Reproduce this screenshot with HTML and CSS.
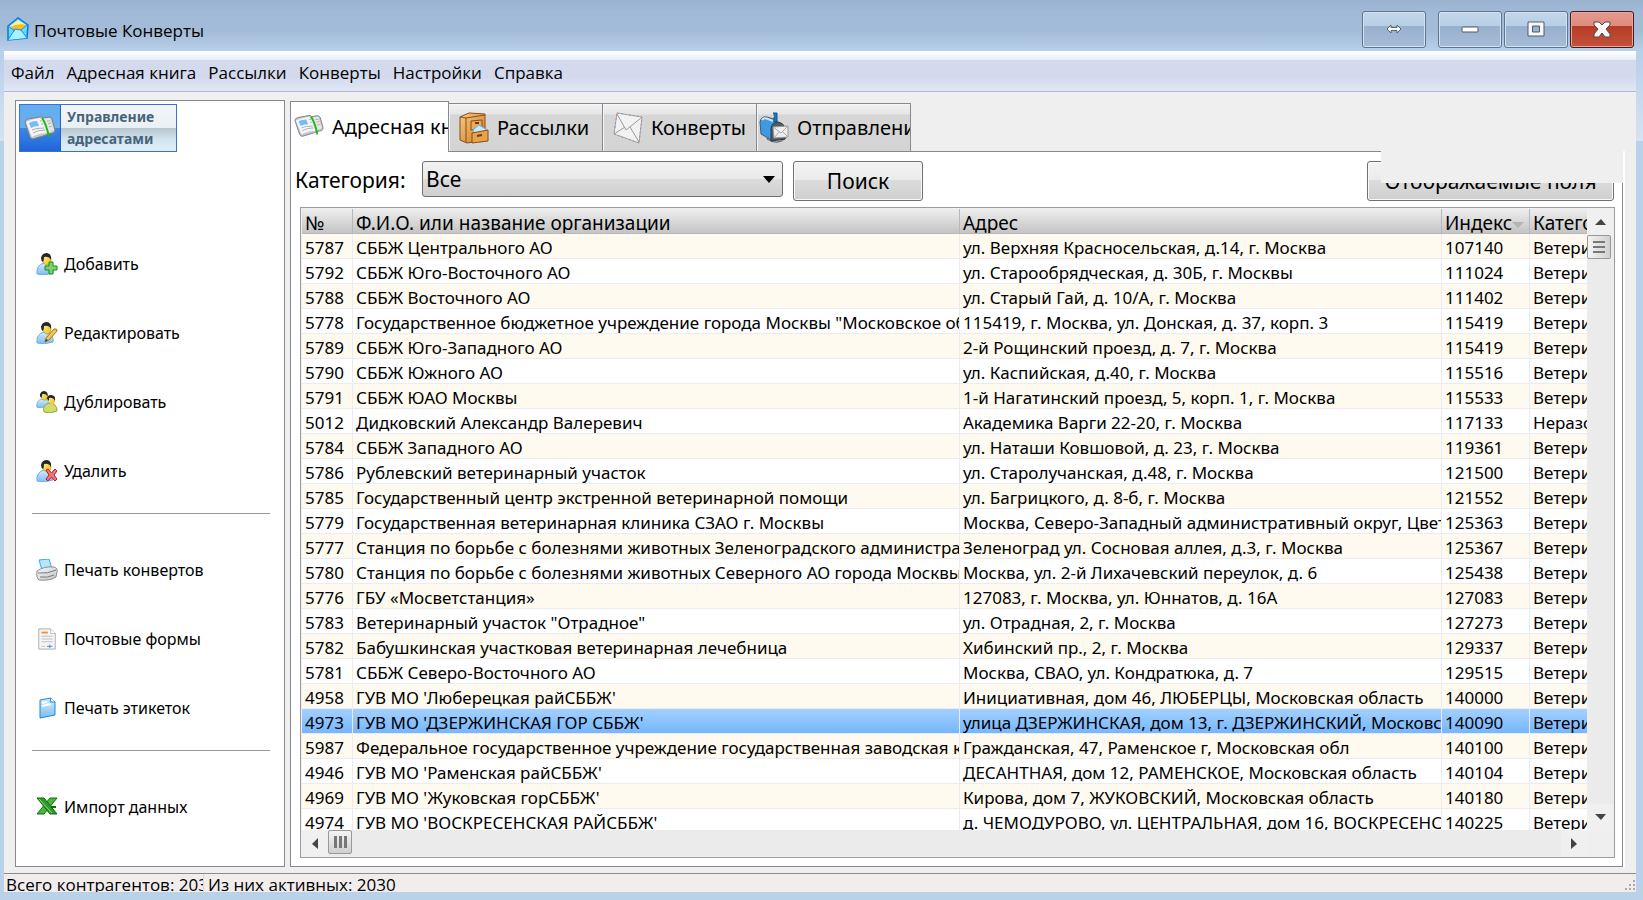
FILE: index.html
```html
<!DOCTYPE html>
<html lang="ru">
    <head>
        <meta charset="utf-8" />
        <title>Почтовые Конверты</title>
        <link rel="stylesheet" href="styles.css">
    </head>

    <body>
        <svg class="defs" width="0" height="0">
            <defs>
                <linearGradient id="blue" x1="0" y1="0" x2="0" y2="1">
                    <stop offset="0" stop-color="#d4ecff" />
                    <stop offset="1" stop-color="#7dbdf2" />
                </linearGradient>
                <linearGradient id="skin" x1="0" y1="0" x2="1" y2="1">
                    <stop offset="0" stop-color="#fff2a0" />
                    <stop offset="1" stop-color="#eeb808" />
                </linearGradient>
                <linearGradient id="wood" x1="0" y1="0" x2="1" y2="1">
                    <stop offset="0" stop-color="#f8cb82" />
                    <stop offset="1" stop-color="#c87a28" />
                </linearGradient>
                <linearGradient id="metal" x1="0" y1="0" x2="1" y2="1">
                    <stop offset="0" stop-color="#fafafa" />
                    <stop offset="1" stop-color="#bfc2c5" />
                </linearGradient>
            </defs>
            <symbol id="book" viewBox="0 0 32 26">
                <path d="M1 7 Q1 5 4 4 L15 2 Q18 1 19 3 L25 2 Q27 2 28 4 L31 15 Q31 17 29 18 L24 19 L22 20 L9 24 Q7 24 6 22 Z" fill="#c5c9cc" stroke="#7a8085" />
                <path d="M2 7 Q8 4 16 3 L18 4 L23 18 Q15 18 8 22 Z" fill="#f3f5f6" />
                <path d="M18 4 L26 3 L30 15 L23 18 Z" fill="#e4e7e8" />
                <path d="M5 8 Q8 6 13 6 L15 11 Q10 11 7 13 Z" fill="#74bdf5" />
                <path d="M8 15 Q12 13 20 13 M9 18 Q14 15 21 15 M16 6 L18 6 M17 9 L19 9 M23 6 L26 6 M24 9 L27 8 M25 12 L28 11" fill="none" stroke="#a9afb4" />
                <path d="M18 3 Q22 8 25 22" fill="none" stroke="#22b814" stroke-width="2" />
            </symbol>
            <symbol id="person" viewBox="0 0 22 22">
                <path d="M1 21 Q0 12 8 10 L13 11 Q18 14 17 20 Q8 23 1 21Z" fill="url(#blue)" stroke="#69aeea" />
                <ellipse cx="11" cy="7" rx="4" ry="5" fill="url(#skin)" stroke="#a3780a" stroke-width=".5" />
                <path d="M5 5 Q6 0 11 0 Q16 1 15 7 Q13 3 8 4 Q8 7 7 9 Q5 8 5 5Z" fill="#262626" />
            </symbol>
        </svg>

        <div class="window">
            <header class="titlebar">
                <svg class="app-icon" viewBox="0 0 22 24">
                    <path d="M1 9 L11 1 L21 8 L20 21 L1 23 Z" fill="#62dcff" stroke="#0878e0" stroke-width="1.5" />
                    <path d="M3 9 L11 3 L19 8 L15 13 L6 13 Z" fill="#fff09c" />
                    <path d="M3 10 Q11 6 19 8 L15 13 L6 13 Z" fill="#f9bd18" />
                    <path d="M1 23 L8 12 L14 13 L20 21 M1 9 L8 14 M20 8 L14 13" fill="#a8f2ff" stroke="#108ef0" stroke-width="1" />
                </svg>
                <span class="title">Почтовые Конверты</span>
                <div class="window-buttons">
                    <button class="resize" aria-label="Переместить">
                        <svg width="16" height="10" viewBox="0 0 16 10"><path d="M1 5 L5 1 V3.500 H11 V1 L15 5 L11 9 V6.500 H5 V9 Z" fill="#fff" stroke="#596577" /></svg>
                    </button>
                    <button aria-label="Свернуть">
                        <svg width="18" height="8" viewBox="0 0 18 8"><rect x="1" y="2" width="16" height="5" rx="1" fill="#fff" stroke="#525a6b" /></svg>
                    </button>
                    <button aria-label="Развернуть">
                        <svg width="18" height="16" viewBox="0 0 18 16"><path d="M1 1 H17 V15 H1 Z M5.500 5 V11 H12.500 V5 Z" fill="#f6f8fb" fill-rule="evenodd" stroke="#525a6b" /></svg>
                    </button>
                    <button class="close" aria-label="Закрыть">
                        <svg width="20" height="17" viewBox="0 0 20 17"><path d="M2 1 H7 L10 4 L13 1 H18 V4 L14 8 L18 13 V16 H13 L10 12 L7 16 H2 V13 L6 8 L2 4 Z" fill="#f8f6f6" stroke="#4f4653" /></svg>
                    </button>
                </div>
            </header>

            <div class="client">
                <nav class="menu">
                    <a href="#">Файл</a>
                    <a href="#">Адресная книга</a>
                    <a href="#">Рассылки</a>
                    <a href="#">Конверты</a>
                    <a href="#">Настройки</a>
                    <a href="#">Справка</a>
                </nav>

                <div class="content">
                    <aside class="sidebar">
                        <button class="manage">
                            <span class="manage-icon"><svg width="32" height="26"><use href="#book" /></svg></span>
                            <span class="manage-text">Управление<br />адресатами</span>
                        </button>
                        <div class="actions">
                            <button>
                                <svg viewBox="0 0 22 22"><use href="#person" /><path d="M13 9 H17 V13 H21 V17 H17 V21 H13 V17 H9 V13 H13Z" fill="#7ed070" stroke="#168c1c" /></svg>
                                Добавить
                            </button>
                            <button>
                                <svg viewBox="0 0 22 22"><use href="#person" /><path d="M9 20 L10 16 L18 7 Q21 6 21 9 L13 18 Z" fill="#f5c45d" stroke="#a7751c" /><path d="M9 20 L10 17 L12 18Z" fill="#333" /></svg>
                                Редактировать
                            </button>
                            <button>
                                <svg viewBox="0 0 22 22"><use href="#person" width="17" height="17" /><path d="M8 21 Q6 14 13 12 Q21 12 21 20 Q14 23 8 21Z" fill="#cfdd70" stroke="#93a82f" /><ellipse cx="16" cy="9" rx="3" ry="4" fill="url(#skin)" /><path d="M11 8 Q11 4 15 4 Q20 4 19 10 Q17 6 13 7 L13 10Z" fill="#262626" /></svg>
                                Дублировать
                            </button>
                            <button>
                                <svg viewBox="0 0 22 22"><use href="#person" /><path d="M10 10 L12 9 L15.500 13 L19 9 L21 11 L18 15 L21 19 L19 21 L15.500 17 L12 21 L10 19 L13 15Z" fill="#ee7777" stroke="#b81f27" /></svg>
                                Удалить
                            </button>
                            <hr />
                            <button>
                                <svg viewBox="0 0 22 22"><path d="M3 1 L13 0 L16 10 L6 11Z" fill="#b5e5ff" stroke="#3aa9ec" /><path d="M1 12 Q8 7 18 8 Q22 9 21 13 L20 18 Q14 22 3 21 Q0 19 1 12Z" fill="url(#metal)" stroke="#8b8d90" /><path d="M2 14 Q12 15 20 11 M4 18 Q12 19 18 16" fill="none" stroke="#77797c" /></svg>
                                Печать конвертов
                            </button>
                            <button>
                                <svg viewBox="0 0 22 24"><path d="M2 1 H15 L20 6 V23 H2Z" fill="#f5f5f6" stroke="#aaa" /><path d="M15 1 V6 H20" fill="#fff" stroke="#bbb" /><path d="M5 5 H12" stroke="#ff8a2a" stroke-width="2" /><path d="M5 9 H17 M5 12 H17 M5 15 H17 M5 20 H9" stroke="#b9bbc0" /><path d="M11 20 H17 M14 18 V22" stroke="#2e8cd8" /></svg>
                                Почтовые формы
                            </button>
                            <button>
                                <svg viewBox="0 0 22 22"><path d="M4 3 L15 1 L19 5 V18 L4 21Z" fill="url(#blue)" stroke="#1989d8" /><path d="M15 1 L14 5 L19 5" fill="#fff" stroke="#1989d8" /><path d="M6 6 L11 5 M6 9 L15 7" stroke="#fff" stroke-width="2" /></svg>
                                Печать этикеток
                            </button>
                            <hr />
                            <button>
                                <svg viewBox="0 0 22 22"><path d="M14 2 H21 L8 18 H1 Z" fill="#4cb83a" stroke="#116b10" /><path d="M1 2 H8 L21 18 H14 Z" fill="#2c9b27" stroke="#116b10" /><path d="M3 3 L16 17" stroke="#8be07a" /><path d="M15 11 H20" stroke="#116b10" stroke-width="2" /></svg>
                                Импорт данных
                            </button>
                        </div>
                    </aside>

                    <main class="main">
                        <div class="tabs" role="tablist">
                            <button class="tab active" role="tab" aria-selected="true">
                                <svg viewBox="0 0 32 26"><use href="#book" width="32" height="26" /></svg>
                                Адресная книга
                            </button>
                            <button class="tab" role="tab">
                                <svg viewBox="0 0 30 32"><path d="M1 5 L10 1 L26 2 V28 L8 31 L1 28Z" fill="url(#wood)" stroke="#8a4d13" /><path d="M7 6 L26 3 M7 6 V31 M1 5 L7 6" fill="none" stroke="#8a4d13" /><path d="M12 9 L23 8 V17 L12 18Z" fill="#e8aa58" stroke="#8a4d13" /><path d="M16 11 H20" stroke="#6d3a0c" stroke-width="2" /><path d="M14 18 L20 13 L28 18 L24 24 L16 23Z" fill="#c3ebff" stroke="#5eb8e8" /><path d="M13 21 L29 18 V29 L13 31Z" fill="#e9a14a" stroke="#8a4d13" /><path d="M18 24 L23 23" stroke="#6d3a0c" stroke-width="2" /></svg>
                                Рассылки
                            </button>
                            <button class="tab" role="tab">
                                <svg viewBox="0 0 30 32"><path d="M4 1 L29 5 L26 31 L1 22Z" fill="#f2f2f2" stroke="#aaa" /><path d="M4 1 L29 5 L26 31 L1 22Z" fill="none" stroke="#d88080" stroke-dasharray="2 6" /><path d="M4 1 L29 5 L26 31 L1 22Z" fill="none" stroke="#6b9bd8" stroke-dasharray="2 6" stroke-dashoffset="4" /><path d="M4 2 L13 18 L28 6 M1 22 L12 15 M17 15 L26 30" fill="none" stroke="#999" /></svg>
                                Конверты
                            </button>
                            <button class="tab" role="tab">
                                <svg viewBox="0 0 30 32"><path d="M8 27 Q18 34 27 26 L27 18 L12 16Z" fill="#a9b1b7" stroke="#596067" /><path d="M1 10 Q2 4 8 5 L18 8 L15 20 L14 29 L2 22Z" fill="#3e99e4" stroke="#4b5963" /><path d="M3 8 Q5 5 9 7 L14 9" fill="none" stroke="#c5e5fb" stroke-width="2" /><path d="M12 29 V17 Q13 10 19 10 Q25 11 26 17 V27Z" fill="#535b63" stroke="#30373d" /><path d="M14 1 L18 1 V10 H15 V5" fill="#1875c6" stroke="#0d529a" /><path d="M14 15 L29 14 V25 L15 26Z" fill="#eee" stroke="#999" /><path d="M14 15 L22 21 L29 14 M15 26 L20 20 M29 25 L24 20" fill="none" stroke="#aaa" /></svg>
                                Отправления
                            </button>
                        </div>

                        <section class="pane">
                            <div class="toolbar">
                                <label for="category">Категория:</label>
                                <span class="select-box">
                                    <select id="category">
                                        <option>Все</option>
                                    </select>
                                </span>
                                <button class="push search">Поиск</button>
                                <button class="push fields">Отображаемые поля</button>
                            </div>
                            <div class="patch"></div>

                            <div class="grid">
                                <div class="viewport">
                                    <table>
                                        <colgroup>
                                            <col class="col-id" />
                                            <col />
                                            <col class="col-address" />
                                            <col class="col-index" />
                                            <col class="col-category" />
                                        </colgroup>
                                        <thead>
                                            <tr>
                                                <th>№</th>
                                                <th>Ф.И.О. или название организации</th>
                                                <th>Адрес</th>
                                                <th class="sorted">Индекс</th>
                                                <th>Категория</th>
                                            </tr>
                                        </thead>
                                        <tbody>
                                            <tr><td>5787</td><td>СББЖ Центрального АО</td><td>ул. Верхняя Красносельская, д.14, г. Москва</td><td>107140</td><td>Ветеринария</td></tr>
                                            <tr><td>5792</td><td>СББЖ Юго-Восточного АО</td><td>ул. Старообрядческая, д. 30Б, г. Москвы</td><td>111024</td><td>Ветеринария</td></tr>
                                            <tr><td>5788</td><td>СББЖ Восточного АО</td><td>ул. Старый Гай, д. 10/А, г. Москва</td><td>111402</td><td>Ветеринария</td></tr>
                                            <tr><td>5778</td><td>Государственное бюджетное учреждение города Москвы "Московское объединение"</td><td>115419, г. Москва, ул. Донская, д. 37, корп. 3</td><td>115419</td><td>Ветеринария</td></tr>
                                            <tr><td>5789</td><td>СББЖ Юго-Западного АО</td><td>2-й Рощинский проезд, д. 7, г. Москва</td><td>115419</td><td>Ветеринария</td></tr>
                                            <tr><td>5790</td><td>СББЖ Южного АО</td><td>ул. Каспийская, д.40, г. Москва</td><td>115516</td><td>Ветеринария</td></tr>
                                            <tr><td>5791</td><td>СББЖ ЮАО Москвы</td><td>1-й Нагатинский проезд, 5, корп. 1, г. Москва</td><td>115533</td><td>Ветеринария</td></tr>
                                            <tr><td>5012</td><td>Дидковский Александр Валеревич</td><td>Академика Варги 22-20, г. Москва</td><td>117133</td><td>Неразобранное</td></tr>
                                            <tr><td>5784</td><td>СББЖ Западного АО</td><td>ул. Наташи Ковшовой, д. 23, г. Москва</td><td>119361</td><td>Ветеринария</td></tr>
                                            <tr><td>5786</td><td>Рублевский ветеринарный участок</td><td>ул. Старолучанская, д.48, г. Москва</td><td>121500</td><td>Ветеринария</td></tr>
                                            <tr><td>5785</td><td>Государственный центр экстренной ветеринарной помощи</td><td>ул. Багрицкого, д. 8-б, г. Москва</td><td>121552</td><td>Ветеринария</td></tr>
                                            <tr><td>5779</td><td>Государственная ветеринарная клиника СЗАО г. Москвы</td><td>Москва, Северо-Западный административный округ, Цветочный</td><td>125363</td><td>Ветеринария</td></tr>
                                            <tr><td>5777</td><td>Станция по борьбе с болезнями животных Зеленоградского административного</td><td>Зеленоград ул. Сосновая аллея, д.3, г. Москва</td><td>125367</td><td>Ветеринария</td></tr>
                                            <tr><td>5780</td><td>Станция по борьбе с болезнями животных Северного АО города Москвы</td><td>Москва, ул. 2-й Лихачевский переулок, д. 6</td><td>125438</td><td>Ветеринария</td></tr>
                                            <tr><td>5776</td><td>ГБУ «Мосветстанция»</td><td>127083, г. Москва, ул. Юннатов, д. 16А</td><td>127083</td><td>Ветеринария</td></tr>
                                            <tr><td>5783</td><td>Ветеринарный участок "Отрадное"</td><td>ул. Отрадная, 2, г. Москва</td><td>127273</td><td>Ветеринария</td></tr>
                                            <tr><td>5782</td><td>Бабушкинская участковая ветеринарная лечебница</td><td>Хибинский пр., 2, г. Москва</td><td>129337</td><td>Ветеринария</td></tr>
                                            <tr><td>5781</td><td>СББЖ Северо-Восточного АО</td><td>Москва, СВАО, ул. Кондратюка, д. 7</td><td>129515</td><td>Ветеринария</td></tr>
                                            <tr><td>4958</td><td>ГУВ МО 'Люберецкая райСББЖ'</td><td>Инициативная, дом 46, ЛЮБЕРЦЫ, Московская область</td><td>140000</td><td>Ветеринария</td></tr>
                                            <tr class="selected"><td>4973</td><td>ГУВ МО 'ДЗЕРЖИНСКАЯ ГОР СББЖ'</td><td>улица ДЗЕРЖИНСКАЯ, дом 13, г. ДЗЕРЖИНСКИЙ, Московская</td><td>140090</td><td>Ветеринария</td></tr>
                                            <tr><td>5987</td><td>Федеральное государственное учреждение государственная заводская конюшня</td><td>Гражданская, 47, Раменское г, Московская обл</td><td>140100</td><td>Ветеринария</td></tr>
                                            <tr><td>4946</td><td>ГУВ МО 'Раменская райСББЖ'</td><td>ДЕСАНТНАЯ, дом 12, РАМЕНСКОЕ, Московская область</td><td>140104</td><td>Ветеринария</td></tr>
                                            <tr><td>4969</td><td>ГУВ МО 'Жуковская горСББЖ'</td><td>Кирова, дом 7, ЖУКОВСКИЙ, Московская область</td><td>140180</td><td>Ветеринария</td></tr>
                                            <tr><td>4974</td><td>ГУВ МО 'ВОСКРЕСЕНСКАЯ РАЙСББЖ'</td><td>д. ЧЕМОДУРОВО, ул. ЦЕНТРАЛЬНАЯ, дом 16, ВОСКРЕСЕНСК</td><td>140225</td><td>Ветеринария</td></tr>
                                        </tbody>
                                    </table>
                                </div>
                                <div class="scroll vertical">
                                    <button class="arrow" aria-label="Вверх"><svg width="11" height="6"><path d="M0 6 L6 0 L11 6Z" /></svg></button>
                                    <div class="thumb"></div>
                                    <button class="arrow last" aria-label="Вниз"><svg width="11" height="6"><path d="M0 0 H11 L6 6Z" /></svg></button>
                                </div>
                                <div class="scroll horizontal">
                                    <button class="arrow" aria-label="Влево"><svg width="6" height="11"><path d="M6 0 V11 L0 6Z" /></svg></button>
                                    <div class="thumb"></div>
                                    <button class="arrow last" aria-label="Вправо"><svg width="6" height="11"><path d="M0 0 L6 6 L0 11Z" /></svg></button>
                                </div>
                            </div>
                        </section>
                    </main>
                </div>

                <footer class="status">
                    <span class="total">Всего контрагентов: 2030</span>
                    <span class="enabled">Из них активных: 2030</span>
                    <svg class="grip" width="12" height="12" viewBox="0 0 12 12"><path d="M9 0h2v2h-2z M9 4h2v2h-2z M5 4h2v2h-2z M9 8h2v2h-2z M5 8h2v2h-2z M1 8h2v2h-2z" fill="#aaa" /></svg>
                </footer>
            </div>
        </div>
    </body>
</html>
```
FILE: styles.css
```css
* {
    box-sizing: border-box;
}

body {
    margin: 0;
    color: #000;
    font-family: 'Noto Sans', 'Open Sans', sans-serif;
    font-size: 17px;
}

button,
select {
    color: inherit;
    font: inherit;
}

button {
    padding: 0;
    border: 0;
    background: none;
}

svg {
    display: block;
    flex: none;
}

.defs {
    position: absolute;
}

/* window frame */
.window {
    display: flex;
    flex-direction: column;
    height: 100vh;
    padding: 0 7px 8px 4px;
    background: linear-gradient(transparent 60px, rgba(255, 255, 255, 0.4) 141px, transparent 141px), linear-gradient(#98b2d0, #a0bad8 12px, #a3bcd8 32px, #b8d0ea 51px, #bad1ea 60px);
}

.titlebar {
    display: flex;
    align-items: center;
    height: 51px;
    padding: 10px 2px 3px 3px;
    flex: none;
}

.app-icon {
    width: 22px;
    height: 24px;
}

.title {
    padding-top: 2px;
    margin-left: 5px;
    font-family: 'Open Sans', sans-serif;
}

.window-buttons {
    display: flex;
    gap: 2px;
    margin-left: auto;
}

.window-buttons button {
    display: flex;
    align-items: center;
    justify-content: center;
    width: 64px;
    height: 37px;
    border: 1px solid #5d7390;
    border-radius: 3px;
    background: linear-gradient(#c2d7eb, #b8cee5 40%, #98b0cd 40%, #a5bdd8);
    box-shadow: inset 0 0 0 1px #d5e4f2;
}

.window-buttons .resize {
    margin-right: 10px;
}

.window-buttons .close {
    border-color: #4b1720;
    background: linear-gradient(#e59b90, #dc8a7c 40%, #b53c25 40%, #c5523c);
    box-shadow: inset 0 0 0 1px #e8a79b;
}

.client {
    display: flex;
    flex: 1;
    flex-direction: column;
    min-height: 0;
    background: #efefef;
}

.menu {
    display: flex;
    gap: 12px;
    align-items: center;
    height: 41px;
    padding: 2px 7px 0;
    border-bottom: 1px solid #b1b7d0;
    background: linear-gradient(#fff, #e8edf6 9px, #d3daec 9px, #d4daed 26px, #e2e7f5);
    flex: none;
}

.menu a {
    color: #000;
    font-family: 'Open Sans', sans-serif;
    text-decoration: none;
}

.content {
    display: flex;
    flex: 1;
    gap: 5px;
    min-height: 0;
    padding: 8px 13px 6px 11px;
}

/* left panel */
.sidebar {
    width: 270px;
    padding: 3px;
    border: 1px solid #888893;
    background: #fff;
    flex: none;
}

.manage {
    display: flex;
    width: 158px;
    height: 48px;
    border: 1px solid #3e6fca;
    text-align: left;
}

.manage-icon {
    display: flex;
    align-items: center;
    justify-content: center;
    width: 40px;
    height: 100%;
    background: linear-gradient(#62aef0, #68aef0 50%, #3e86e5 50%, #1e66dc);
}

.manage-text {
    flex: 1;
    height: 100%;
    padding: 1px 6px;
    border-left: 1px solid #2c5cc0;
    background: linear-gradient(#f3f6f9, #e9f0f4 50%, #b6c5ce 50%, #d2e4f0 75%, #deeffb);
    color: #466478;
    font-size: 14px;
    font-weight: bold;
    line-height: 22px;
}

.actions {
    padding: 77px 11px 0 13px;
}

.actions button {
    display: flex;
    gap: 6px;
    align-items: center;
    width: 100%;
    height: 69px;
    padding-left: 4px;
    font-size: 16px;
}

.actions svg {
    width: 22px;
    height: 22px;
}

.actions hr {
    margin: 8px 0 21px;
    border: 0;
    border-top: 1px solid #98989c;
}

/* tabs */
.main {
    display: flex;
    flex: 1;
    flex-direction: column;
    min-width: 0;
}

.tabs {
    display: flex;
    align-items: flex-end;
    margin-bottom: -1px;
    padding-top: 1px;
    flex: none;
}

.tab {
    display: flex;
    gap: 8px;
    align-items: center;
    overflow: hidden;
    width: 154px;
    height: 49px;
    padding: 0 0 0 10px;
    border: 1px solid #888893;
    border-left-width: 0;
    background: linear-gradient(#f1f1f1, #e6e6e6 10px, #d6d6d6 11px, #d4d4d4);
    box-shadow: inset 1px 1px #f6f6f6;
    font-size: 20px;
    white-space: nowrap;
}

.tab.active {
    z-index: 1;
    width: 159px;
    height: 51px;
    padding: 0 0 2px 3px;
    border-left-width: 1px;
    border-bottom: 0;
    background: #fff;
    box-shadow: none;
}

.tab:last-child {
    padding-left: 2px;
}

.tab svg {
    width: 30px;
    height: 32px;
}

.pane {
    position: relative;
    display: flex;
    flex: 1;
    flex-direction: column;
    min-height: 0;
    padding: 9px 7px 8px 9px;
    border: 1px solid #888893;
    background: #fff;
    box-shadow: 2px 0 #fff;
}

.toolbar {
    display: flex;
    align-items: flex-start;
    height: 46px;
    padding-right: 1px;
    font-size: 21px;
    flex: none;
}

.toolbar label {
    width: 127px;
    margin-left: -5px;
    line-height: 38px;
}

.select-box {
    position: relative;
    width: 361px;
}

.select-box::after {
    position: absolute;
    top: 15px;
    right: 8px;
    border: 6px solid transparent;
    border-top: 7px solid #000;
    border-bottom: 0;
    content: '';
}

.select-box select {
    width: 100%;
    height: 36px;
    padding: 0 3px;
    border: 1px solid #707070;
    border-radius: 3px;
    appearance: none;
    background: linear-gradient(#f2f2f2, #e9e9e9 50%, #dcdcdc 50%, #cfcfcf);
}

.push {
    height: 40px;
    border: 1px solid #707070;
    border-radius: 3px;
    background: linear-gradient(#f3f3f3, #ebebeb 48%, #dcdcdc 48%, #cfcfcf);
    box-shadow: inset 0 0 0 1px #f8f8f8;
}

.search {
    width: 130px;
    margin-left: 10px;
}

.fields {
    width: 247px;
    margin-left: auto;
}

/* empty strip lying over the top right corner of the pane */
.patch {
    position: absolute;
    top: -1px;
    right: -1px;
    width: 242px;
    height: 32px;
    background: #efefef;
}

/* address list */
.grid {
    display: grid;
    flex: 1;
    grid-template-columns: minmax(0, 1fr) 26px;
    grid-template-rows: minmax(0, 1fr) 26px;
    min-height: 0;
    padding: 1px;
    border: 1px solid #9b9ba0;
    background: #efefef;
}

.viewport {
    overflow: hidden;
    background: #fff;
}

table {
    width: 100%;
    border-collapse: separate;
    border-spacing: 0;
    table-layout: fixed;
}

.col-id {
    width: 51px;
}

.col-address {
    width: 482px;
}

.col-index {
    width: 88px;
}

.col-category {
    width: 57px;
}

th,
td {
    overflow: hidden;
    height: 25px;
    padding: 4px 3px 0;
    border-right: 1px solid #ececf0;
    border-bottom: 1px solid #ececf0;
    font-weight: normal;
    line-height: 20px;
    text-align: left;
    white-space: nowrap;
}

th {
    border-color: #b8b8b8;
    background: linear-gradient(#eee, #c4c4c4);
    font-size: 19px;
}

.sorted::after {
    display: inline-block;
    border: 6px solid transparent;
    border-top-color: #b4b4b4;
    border-bottom: 0;
    vertical-align: middle;
    content: '';
}

th:last-child,
td:last-child {
    border-right: 0;
}

tbody tr:nth-child(odd) {
    background: #fffaef;
}

tbody .selected {
    background: linear-gradient(#a3d1ff, #74b5fc);
}

.scroll {
    display: flex;
    background: #ebebeb;
}

.vertical {
    flex-direction: column;
}

.arrow {
    display: flex;
    align-items: center;
    justify-content: center;
    width: 26px;
    height: 26px;
    background: #f0f0f0;
    fill: #444;
}

.vertical .last {
    margin-top: auto;
}

.horizontal .last {
    margin-left: auto;
}

.thumb {
    width: 24px;
    height: 24px;
    border: 1px solid #999;
    border-radius: 2px;
    background: repeating-linear-gradient(#777 0 2px, transparent 2px 5px) center / 12px 12px no-repeat, linear-gradient(90deg, #f4f4f4, #d0d0d0);
}

.horizontal .thumb {
    background: repeating-linear-gradient(90deg, #777 0 3px, transparent 3px 5px) center / 13px 12px no-repeat, linear-gradient(#f4f4f4, #d0d0d0);
}

/* status bar */
.status {
    display: flex;
    align-items: flex-start;
    overflow: hidden;
    height: 19px;
    padding-left: 2px;
    border-top: 1px solid #8c8c8c;
    background: #f0edec;
    font-family: 'Open Sans', sans-serif;
    line-height: 22px;
    white-space: nowrap;
    flex: none;
}

.total {
    overflow: hidden;
    width: 198px;
    border-right: 1px solid #d6d6d6;
}

.enabled {
    margin-left: 4px;
}

.grip {
    align-self: flex-end;
    margin-left: auto;
}
```
